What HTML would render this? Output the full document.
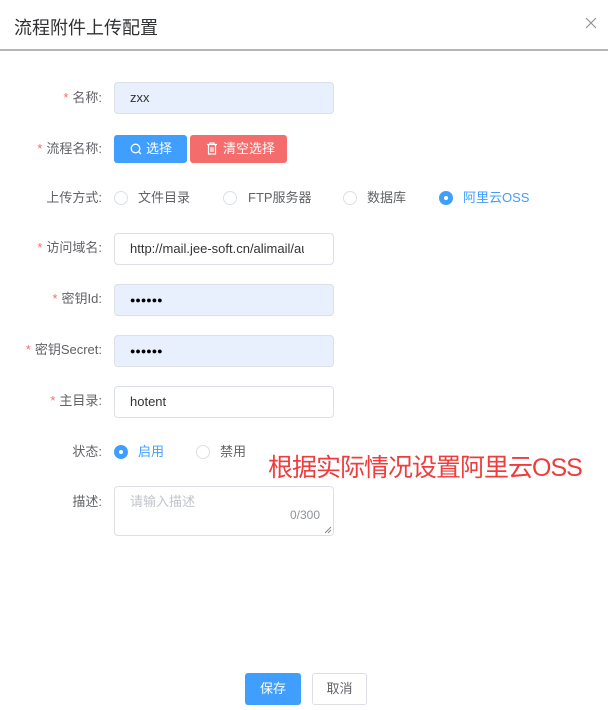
<!DOCTYPE html>
<html><head><meta charset="utf-8"><style>
*{margin:0;padding:0;box-sizing:border-box}
body{width:608px;height:710px;background:#fff;font-family:"Liberation Sans","Noto Sans CJK SC",sans-serif;position:relative;overflow:hidden;color:#606266;font-size:13px}
.a{position:absolute}
.title{left:14px;top:16px;font-size:18px;color:#303133;line-height:24px}
.hr{left:0;top:49px;width:608px;height:2px;background:#b5b5b5}
.lbl{right:506px;width:110px;text-align:right;line-height:20px;font-size:13px;color:#606266;white-space:nowrap}
.lbl i{font-style:normal;color:#f56c6c;margin-right:4px}
.inp{left:114px;width:220px;height:32px;border:1px solid #dcdfe6;border-radius:4px;padding-left:15px;line-height:30px;color:#333;font-size:13px;white-space:nowrap;overflow:hidden}
.fill{background:#e8f0fe}
.dots{font-size:9px;letter-spacing:0px;color:#000}
.btn{height:28px;border-radius:3px;color:#fff;font-size:13px;line-height:28px}
.rad{width:14px;height:14px;border:1px solid #dcdfe6;border-radius:50%}
.rad.on{background:#409eff;border-color:#409eff}
.rad.on:after{content:"";position:absolute;left:4px;top:4px;width:4px;height:4px;background:#fff;border-radius:50%}
.rt{line-height:20px;font-size:13px;color:#606266}
.rt.on{color:#409eff}
</style></head><body>
<div class="a title">流程附件上传配置</div>
<svg class="a" style="left:585px;top:17px" width="12" height="12"><path d="M1 1L11 11M11 1L1 11" stroke="#909399" stroke-width="1.2"/></svg>
<div class="a hr"></div>

<div class="a lbl" style="top:88px"><i>*</i>名称:</div>
<div class="a inp fill" style="top:82px">zxx</div>

<div class="a lbl" style="top:139px"><i>*</i>流程名称:</div>
<div class="a btn" style="left:114px;top:135px;width:73px;background:#409eff">
<svg class="a" style="left:16px;top:8px" width="12" height="12"><circle cx="5.5" cy="5.5" r="4.3" fill="none" stroke="#fff" stroke-width="1.3"/><path d="M8.5 8.5L11 11" stroke="#fff" stroke-width="1.3"/></svg>
<span class="a" style="left:32px;top:0">选择</span></div>
<div class="a btn" style="left:190px;top:135px;width:97px;background:#f56c6c">
<svg class="a" style="left:16px;top:7px" width="12" height="13"><path d="M1 2.5H11M4 2.5V1H8V2.5M2.5 2.5V12H9.5V2.5M5 5V10M7 5V10" fill="none" stroke="#fff" stroke-width="1.2"/></svg>
<span class="a" style="left:33px;top:0">清空选择</span></div>

<div class="a lbl" style="top:188px">上传方式:</div>
<div class="a rad" style="left:114px;top:191px"></div><div class="a rt" style="left:138px;top:188px">文件目录</div>
<div class="a rad" style="left:223px;top:191px"></div><div class="a rt" style="left:248px;top:188px">FTP服务器</div>
<div class="a rad" style="left:343px;top:191px"></div><div class="a rt" style="left:367px;top:188px">数据库</div>
<div class="a rad on" style="left:439px;top:191px"></div><div class="a rt on" style="left:463px;top:188px">阿里云OSS</div>

<div class="a lbl" style="top:238px"><i>*</i>访问域名:</div>
<div class="a inp" style="top:233px"><div style="width:174px;overflow:hidden">http://mail.jee-soft.cn/alimail/auth</div></div>

<div class="a lbl" style="top:289px"><i>*</i>密钥Id:</div>
<div class="a inp fill dots" style="top:284px">●●●●●●</div>

<div class="a lbl" style="top:340px"><i>*</i>密钥Secret:</div>
<div class="a inp fill dots" style="top:335px">●●●●●●</div>

<div class="a lbl" style="top:391px"><i>*</i>主目录:</div>
<div class="a inp" style="top:386px">hotent</div>

<div class="a lbl" style="top:442px">状态:</div>
<div class="a rad on" style="left:114px;top:445px"></div><div class="a rt on" style="left:138px;top:442px">启用</div>
<div class="a rad" style="left:196px;top:445px"></div><div class="a rt" style="left:220px;top:442px">禁用</div>

<div class="a" style="left:268px;top:452px;font-size:25px;line-height:32px;color:#f03c3c;white-space:nowrap;letter-spacing:-1px">根据实际情况设置阿里云OSS</div>

<div class="a lbl" style="top:492px">描述:</div>
<div class="a inp" style="top:486px;height:50px;line-height:20px;padding-top:5px;color:#c0c4cc">请输入描述</div>
<div class="a" style="left:290px;top:508px;font-size:12px;color:#909399">0/300</div>
<svg class="a" style="left:323px;top:525px" width="9" height="9"><path d="M8 2L2 8M8 5L5 8" stroke="#888" stroke-width="1"/></svg>

<div class="a btn" style="left:245px;top:673px;width:56px;height:32px;line-height:32px;background:#409eff;text-align:center">保存</div>
<div class="a btn" style="left:312px;top:673px;width:55px;height:32px;line-height:30px;background:#fff;border:1px solid #dcdfe6;color:#606266;text-align:center">取消</div>
</body></html>
